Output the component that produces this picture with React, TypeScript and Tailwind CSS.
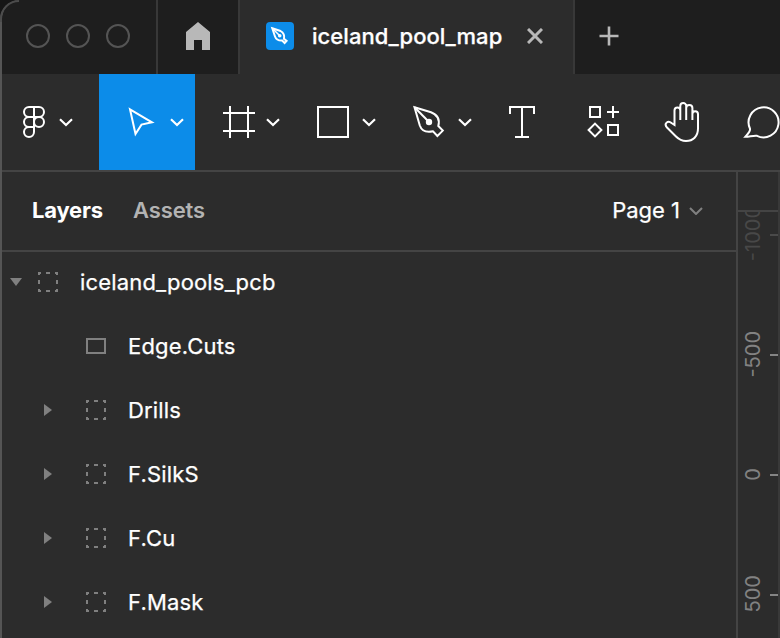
import React from "react";

const INTER = "font-[Inter,'Liberation_Sans',sans-serif]";

function Tool({ x, w, active, children }: { x: number; w: number; active?: boolean; children: React.ReactNode }) {
  return (
    <button className={active ? "h-24 shrink-0 bg-[#0c8ce9]" : "h-24 shrink-0"}>
      <svg
        width={w}
        height={96}
        viewBox={`${x} 74 ${w} 96`}
        fill="none"
        stroke="#fff"
        strokeWidth={2}
        className="block"
      >
        {children}
      </svg>
    </button>
  );
}

function Chevron({ x }: { x: number }) {
  return <path d={`M${x} 119.200l6 5.800 6-5.800`} strokeWidth={2.2} />;
}

function GroupIcon() {
  return (
    <svg width={20} height={20} viewBox="0 0 20 20" fill="none" stroke="#808080" strokeWidth={2} className="shrink-0">
      <path d="M0 1h3M17 1h3M19 0v3M19 17v3M20 19h-3M3 19H0M1 20v-3M1 0v3M8 1h4M8 19h4M1 8v4M19 8v4" />
    </svg>
  );
}

function FrameIcon() {
  return (
    <svg width={20} height={20} viewBox="0 0 20 20" fill="none" stroke="#808080" strokeWidth={2} className="shrink-0">
      <path d="M1 3h18v14H1z" />
    </svg>
  );
}

function Row({ name, open, leaf }: { name: string; open?: boolean; leaf?: boolean }) {
  return (
    <div className={open ? "flex h-16 items-center pl-2" : "flex h-16 items-center pl-10"}>
      <svg width={12} height={12} viewBox="0 0 12 12" fill="#808080" className="shrink-0">
        {open ? <path d="M0 2h12L6 10z" /> : leaf ? null : <path d="M2 0v12l8-6z" />}
      </svg>
      <div className={open ? "ml-4 flex" : "ml-[32px] flex"}>{leaf ? <FrameIcon /> : <GroupIcon />}</div>
      <span className="ml-[22px] tracking-[0.17px] [-webkit-text-stroke:0.25px_#fff]">{name}</span>
    </div>
  );
}

function Mark({ value, faded }: { value: string; faded?: boolean }) {
  return (
    <div className="flex h-[120px] shrink-0 items-center justify-between pl-[2px]">
      <span
        className={
          faded
            ? "mb-[2px] w-[26px] rotate-180 [writing-mode:vertical-rl] text-center leading-[26px] text-[20px] text-[#484848]"
            : "mb-[2px] w-[26px] rotate-180 [writing-mode:vertical-rl] text-center leading-[26px] text-[20px] text-[#828282]"
        }
      >
        {value}
      </span>
      <i className={faded ? "h-[2px] w-2 bg-[#4a4a4a]" : "h-[2px] w-2 bg-[#858585]"} />
    </div>
  );
}

export default function App() {
  return (
    <div className={`${INTER} relative h-[638px] w-[780px] overflow-hidden bg-[#161616]`}>
      <div className="flex h-full flex-col overflow-hidden rounded-tl-[20px] border-l-2 border-[#555] bg-[#2c2c2c] text-[22px] text-white">
        <header className="flex h-[74px] shrink-0 bg-[#1e1e1e]">
          <div className="flex w-[156px] items-center gap-4 border-r-2 border-[#383838] pb-[2px] pl-6">
            <i className="size-6 rounded-full border-2 border-[#545454]" />
            <i className="size-6 rounded-full border-2 border-[#545454]" />
            <i className="size-6 rounded-full border-2 border-[#545454]" />
          </div>
          <div className="flex w-[82px] items-center justify-center border-r-2 border-[#383838] pb-[2px]">
            <svg width={24} height={28} viewBox="0 0 24 28" fill="#b8b8b8">
              <path d="M12 0 24 10v18h-8V18H8v10H0V10z" />
            </svg>
          </div>
          <div className="flex w-[335px] items-center border-r-2 border-[#383838] bg-[#2c2c2c] pb-[2px] pl-[26px]">
            <svg width={28} height={28} viewBox="0 0 28 28" fill="none" stroke="#fff" strokeWidth={2}>
              <rect width={28} height={28} rx={4} fill="#0c8ce9" stroke="none" />
              <path d="M6.300 6.300 14.500 9Q19 11.500 18 16.800L20.600 18.900 18.600 21 16.200 18.500Q10.500 18.800 9 14.500Z" />
              <path d="m6.300 6.300 7.200 7.200" strokeWidth={1.6} />
              <circle cx={13.700} cy={13.700} r={1.800} fill="#fff" stroke="none" />
            </svg>
            <span className="ml-[18px] w-[198px] text-[22px] font-medium tracking-[0.05px] [-webkit-text-stroke:0.25px_#fff]">
              iceland_pool_map
            </span>
            <svg width={16} height={16} viewBox="0 0 16 16" stroke="#b8b8b8" strokeWidth={3} className="ml-[17px]">
              <path d="m1 1 14 14M15 1 1 15" />
            </svg>
          </div>
          <div className="flex items-center pb-[2px] pl-6">
            <svg width={20} height={20} viewBox="0 0 20 20" stroke="#b8b8b8" strokeWidth={2.6}>
              <path d="M10 .5v19M.5 10h19" />
            </svg>
          </div>
        </header>

        <nav className="flex h-[98px] shrink-0 overflow-hidden border-b-2 border-[#444]">
          <Tool x={2} w={97}>
            <path d="M34 107h-5a5 5 0 0 0 0 10h10a5 5 0 0 0 0-10h-5v25a5 5 0 1 1-5-5h5M34 117h-5a5 5 0 0 0 0 10h5" />
            <circle cx={39} cy={122} r={5} />
            <Chevron x={60} />
          </Tool>
          <Tool x={99} w={96} active>
            <path d="M130 109.300 152 122.300 141.500 124.600 135.500 134z" />
            <Chevron x={171} />
          </Tool>
          <Tool x={195} w={96}>
            <path d="M230 106v32M248 106v32M223 113h32M223 131h32" />
            <Chevron x={267} />
          </Tool>
          <Tool x={291} w={96}>
            <path d="M318 107h30v30h-30z" />
            <Chevron x={363} />
          </Tool>
          <Tool x={387} w={96}>
            <path d="M414.500 107.200 431 112.300C438 115 440 119.500 438.300 126L442.800 130.600 437.400 136 433 131.300C425 133 421.500 130.500 419.800 125.500Z" />
            <path d="m414.500 107.200 14.500 14.800" />
            <circle cx={429} cy={122} r={3.200} fill="#fff" stroke="none" />
            <Chevron x={459} />
          </Tool>
          <Tool x={483} w={78}>
            <path d="M510 114v-7h24v7M522 107v30M515 137h14" />
          </Tool>
          <Tool x={561} w={84}>
            <path d="M590 107h10v10h-10zM608 125h10v10h-10zM613 106v12M607 112h12M595 123.600l6.400 6.400-6.400 6.400-6.400-6.400z" />
          </Tool>
          <Tool x={645} w={76}>
            <path d="M674.500 125V110.500a2.900 2.900 0 0 1 5.800 0V106a2.900 2.900 0 0 1 5.900 0v2a3.100 3.100 0 0 1 6.200 0v6a2.800 2.800 0 0 1 5.600 0v14.500c0 8-5 12.500-12 12.500-4 0-7-1.500-10-4.500l-9-9c-3.500-4 1-7.500 4.500-4.500zM680.300 120v-10M686.200 120v-12M692.400 120v-6" />
          </Tool>
          <Tool x={721} w={59}>
            <path d="M750 128.700A15 15 0 1 1 757 135.800C753 135.300 749 137 745.200 136.800 748 133.500 750.500 131.500 750 128.700z" />
          </Tool>
        </nav>

        <main className="flex min-h-0 flex-1">
          <aside className="w-[736px] shrink-0 border-r-2 border-[#444]">
            <div className="flex h-20 items-center border-b-2 border-[#444] pb-[1px] pl-[30px]">
              <span className="w-[102px] font-bold tracking-[-0.2px]">Layers</span>
              <span className="-ml-px font-semibold tracking-[-0.1px] text-[#b3b3b3]">Assets</span>
              <span className="ml-auto [-webkit-text-stroke:0.25px_#fff]">Page 1</span>
              <svg width={14} height={8} viewBox="0 0 14 8" fill="none" stroke="#808080" strokeWidth={2} className="mr-[33px] ml-[9px]">
                <path d="m1 1 6 6 6-6" />
              </svg>
            </div>
            <div className="-mt-[2px] flex flex-col">
              <Row name="iceland_pools_pcb" open />
              <Row name="Edge.Cuts" leaf />
              <Row name="Drills" />
              <Row name="F.SilkS" />
              <Row name="F.Cu" />
              <Row name="F.Mask" />
            </div>
          </aside>
          <div className="flex w-[42px] shrink-0 flex-col border-r-2 border-[#393939]">
            <div className="h-10 shrink-0 border-b-2 border-[#444]" />
            <div className="min-h-0 flex-1 overflow-hidden">
              <div className="-mt-[37px] flex flex-col">
                <Mark value="-1000" faded />
                <Mark value="-500" />
                <Mark value="0" />
                <Mark value="500" />
              </div>
            </div>
          </div>
        </main>
      </div>
      <svg width={24} height={24} viewBox="0 0 24 24" fill="none" stroke="#4c4c4c" strokeWidth={2} className="absolute top-0 left-0">
        <path d="M1 22v-3A18 18 0 0 1 19 1" />
      </svg>
    </div>
  );
}
